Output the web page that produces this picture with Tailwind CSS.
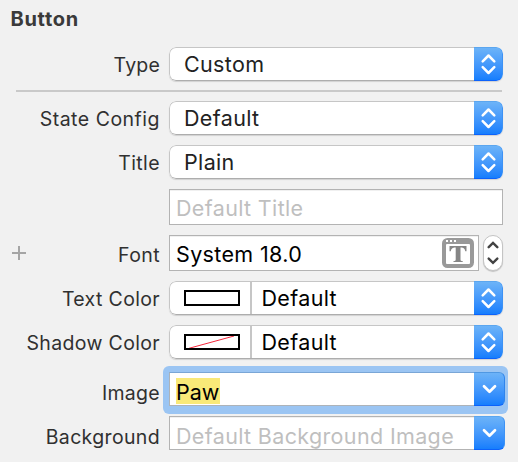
<!DOCTYPE html>
<html lang="en">
<head>
<meta charset="utf-8">
<title>Button</title>
<script src="https://cdn.jsdelivr.net/npm/@tailwindcss/browser@4"></script>
</head>
<body class="h-[462px] w-[518px] overflow-hidden bg-[#f1f1f1] font-['Inter','Liberation_Sans',sans-serif] text-[21.5px] tracking-[0.35px] whitespace-nowrap text-[#222]">
<svg class="hidden">
  <symbol id="updown" viewBox="0 0 29 34"><path d="M8.7 14.3 14.5 8.5l5.8 5.8M8.7 20.2l5.8 5.8 5.8-5.8" fill="none" stroke="#fff" stroke-width="2.5" stroke-linecap="round" stroke-linejoin="round"/></symbol>
  <symbol id="down" viewBox="0 0 31 34"><path d="m10 14.2 5.5 5.6 5.5-5.6" fill="none" stroke="#fff" stroke-width="2.7" stroke-linecap="round" stroke-linejoin="round"/></symbol>
</svg>
<main class="flex flex-col">
  <h1 class="h-[47px] pt-[4px] pl-[10.5px] text-[20px] leading-[30px] font-bold tracking-[0.7px] text-[#3a3a3a]">Button</h1>

  <div class="flex h-[34px] items-center">
    <label class="w-[160px] pt-[4px] text-right text-[19.5px] tracking-[0.2px] text-[#303030]">Type</label>
    <div class="ml-[9px] flex h-[34px] w-[334px] overflow-hidden rounded-[7px] bg-white shadow-[0_1px_1px_#0002]">
      <div class="flex flex-1 items-center rounded-l-[7px] border border-r-0 border-[#c6c6c6] border-b-[#adadad] pl-[14px]">Custom</div>
      <div class="h-[34px] w-[29px] rounded-r-[6px] border border-l-0 border-t-[#5ba6ef] border-r-[#3d92f5] border-b-[#0c62fb] bg-linear-to-b from-[#6cb3f8] to-[#157efd]"><svg class="-mt-px h-[34px] w-[29px]"><use href="#updown"/></svg></div>
    </div>
  </div>

  <hr class="mt-[9px] ml-[16px] h-[2px] w-[486px] border-0 bg-[#c9c9c9]">

  <div class="mt-[9px] flex h-[34px] items-center">
    <label class="w-[160px] pt-[4px] text-right text-[19.5px] tracking-[0.5px] text-[#303030]">State Config</label>
    <div class="ml-[9px] flex h-[34px] w-[334px] overflow-hidden rounded-[7px] bg-white shadow-[0_1px_1px_#0002]">
      <div class="flex flex-1 items-center rounded-l-[7px] border border-r-0 border-[#c6c6c6] border-b-[#adadad] pl-[14px]">Default</div>
      <div class="h-[34px] w-[29px] rounded-r-[6px] border border-l-0 border-t-[#5ba6ef] border-r-[#3d92f5] border-b-[#0c62fb] bg-linear-to-b from-[#6cb3f8] to-[#157efd]"><svg class="-mt-px h-[34px] w-[29px]"><use href="#updown"/></svg></div>
    </div>
  </div>

  <div class="mt-[10px] flex h-[34px] items-center">
    <label class="w-[160px] pt-[4px] text-right text-[19.5px] tracking-[0.4px] text-[#303030]">Title</label>
    <div class="ml-[9px] flex h-[34px] w-[334px] overflow-hidden rounded-[7px] bg-white shadow-[0_1px_1px_#0002]">
      <div class="flex flex-1 items-center rounded-l-[7px] border border-r-0 border-[#c6c6c6] border-b-[#adadad] pl-[14px]">Plain</div>
      <div class="h-[34px] w-[29px] rounded-r-[6px] border border-l-0 border-t-[#5ba6ef] border-r-[#3d92f5] border-b-[#0c62fb] bg-linear-to-b from-[#6cb3f8] to-[#157efd]"><svg class="-mt-px h-[34px] w-[29px]"><use href="#updown"/></svg></div>
    </div>
  </div>

  <div class="mt-[10px] ml-[169px] flex h-[36px] w-[334px] items-center border border-[#b3b3b3] bg-white pt-[2px] pl-[6px] text-[#bfbfbf] shadow-[inset_0_1px_0_#f0f0f0]">Default Title</div>

  <div class="mt-[10px] flex h-[36px] items-center">
    <svg class="ml-[12px] h-[14px] w-[14px]"><path d="M7 0v14M0 7h14" stroke="#a5a5a5" stroke-width="2"/></svg>
    <label class="w-[134px] pt-[6px] text-right text-[19.5px] tracking-[0.4px] text-[#303030]">Font</label>
    <div class="ml-[9px] flex h-[36px] w-[310px] items-center justify-between border border-[#b3b3b3] bg-white pr-[4px] pl-[6px] text-black shadow-[inset_0_1px_0_#f0f0f0]">
      <span class="pt-[2px]">System 18.0</span>
      <svg class="h-[30px] w-[32px]" viewBox="0 0 32 30">
        <rect width="32" height="30" rx="5.5" fill="#999"/>
        <path d="M4 2h2v2H4zM8 2h2v2H8zM12 2h2v2h-2z" fill="#fff"/>
        <rect x="4" y="6" width="24" height="20" rx="1" fill="#fff"/>
        <path d="M7.5 8h17v5.2h-1.2c-.5-2.6-1.4-3.8-4.8-3.8v12.2c0 1.2.5 1.6 2.3 1.7V24h-9.4v-.7c1.8-.1 2.3-.5 2.3-1.7V9.4c-3.4 0-4.4 1.2-4.9 3.8H7.5z" fill="#858585"/>
      </svg>
    </div>
    <div class="ml-[4px] h-[36px] w-[20px] rounded-full border border-[#c4c4c4] bg-white shadow-[0_1px_1px_#0003]">
      <svg class="h-[34px] w-[18px]" viewBox="0 0 18 34"><path d="M4.7 11.2 9 7l4.3 4.2M4.7 22.6 9 26.8l4.3-4.2" fill="none" stroke="#424242" stroke-width="2.4" stroke-linecap="round"/></svg>
    </div>
  </div>

  <div class="mt-[10px] flex h-[34px] items-center">
    <label class="w-[160px] pt-[4px] text-right text-[19.5px] tracking-[0.35px] text-[#303030]">Text Color</label>
    <div class="ml-[9px] flex h-[34px] w-[334px] overflow-hidden rounded-[7px] bg-white shadow-[0_1px_1px_#0002]">
      <div class="flex flex-1 items-center rounded-l-[7px] border border-r-0 border-[#c6c6c6] border-b-[#adadad] pl-[14px] text-black">
        <svg class="h-[16px] w-[56px]"><rect x="1" y="1" width="54" height="14" fill="#fff" stroke="#000" stroke-width="2"/></svg>
        <div class="ml-[10px] h-[32px] w-[2px] bg-[#c6c6c6]"></div>
        <span class="ml-[9.5px]">Default</span>
      </div>
      <div class="h-[34px] w-[29px] rounded-r-[6px] border border-l-0 border-t-[#5ba6ef] border-r-[#3d92f5] border-b-[#0c62fb] bg-linear-to-b from-[#6cb3f8] to-[#157efd]"><svg class="-mt-px h-[34px] w-[29px]"><use href="#updown"/></svg></div>
    </div>
  </div>

  <div class="mt-[10px] flex h-[34px] items-center">
    <label class="w-[160px] pt-[4px] text-right text-[19.5px] tracking-[0.35px] text-[#303030]">Shadow Color</label>
    <div class="ml-[9px] flex h-[34px] w-[334px] overflow-hidden rounded-[7px] bg-white shadow-[0_1px_1px_#0002]">
      <div class="flex flex-1 items-center rounded-l-[7px] border border-r-0 border-[#c6c6c6] border-b-[#adadad] pl-[14px] text-black">
        <svg class="h-[16px] w-[56px]"><path d="M5 14.3 50 2" stroke="#f5283c"/><rect x="1" y="1" width="54" height="14" fill="none" stroke="#000" stroke-width="2"/></svg>
        <div class="ml-[10px] h-[32px] w-[2px] bg-[#c6c6c6]"></div>
        <span class="ml-[9.5px]">Default</span>
      </div>
      <div class="h-[34px] w-[29px] rounded-r-[6px] border border-l-0 border-t-[#5ba6ef] border-r-[#3d92f5] border-b-[#0c62fb] bg-linear-to-b from-[#6cb3f8] to-[#157efd]"><svg class="-mt-px h-[34px] w-[29px]"><use href="#updown"/></svg></div>
    </div>
  </div>

  <div class="mt-[7px] flex h-[48px] items-center">
    <label class="w-[160px] pt-[8px] text-right text-[19.5px] tracking-[0.3px] text-[#303030]">Image</label>
    <div class="ml-[3px] h-[48px] w-[345px] rounded-[6px] bg-[#9bc5f3] pt-[6px] pl-[6px]">
      <div class="flex h-[34px] w-[336px]">
        <div class="flex h-[34px] flex-1 items-center border border-r-0 border-[#adb3b9] border-t-[#7aa6d6] bg-white pt-[4px] pl-[6px] text-black"><span class="h-[26px] w-[44px] bg-[#f9e978] leading-[29px] tracking-normal">Paw</span></div>
        <div class="h-[34px] w-[31px] rounded-r-[6px] border border-l-0 border-t-[#4f98e3] border-r-[#2f84ec] border-b-[#0c62fb] bg-linear-to-b from-[#6cb3f8] to-[#157efd]"><svg class="-mt-px h-[34px] w-[31px]"><use href="#down"/></svg></div>
      </div>
    </div>
  </div>

  <div class="mt-[2px] flex h-[34px] items-center">
    <label class="w-[160px] pt-[9px] text-right text-[19.5px] tracking-[0.35px] text-[#303030]">Background</label>
    <div class="ml-[9px] flex h-[34px] w-[336px]">
      <div class="flex flex-1 items-center border border-r-0 border-[#b3b3b3] bg-white pt-[6px] pl-[6px] text-[#bfbfbf] shadow-[inset_0_1px_0_#f0f0f0]">Default Background Image</div>
      <div class="h-[34px] w-[31px] rounded-r-[6px] border border-l-0 border-t-[#5ba6ef] border-r-[#3d92f5] border-b-[#0c62fb] bg-linear-to-b from-[#6cb3f8] to-[#157efd]"><svg class="-mt-px h-[34px] w-[31px]"><use href="#down"/></svg></div>
    </div>
  </div>
</main>
</body>
</html>
